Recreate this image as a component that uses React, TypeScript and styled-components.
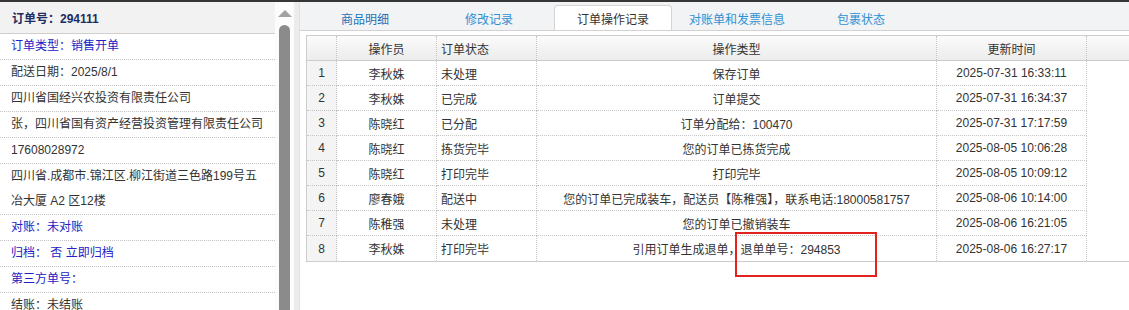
import React from "react";
import styled, { createGlobalStyle } from "styled-components";

const Global = createGlobalStyle`
  html, body { margin: 0; padding: 0; background: #fff; }
  body {
    width: 1129px; height: 310px; overflow: hidden;
    font-family: "Liberation Sans", "Noto Sans CJK SC", sans-serif;
    font-size: 12px; color: #333;
  }
  * { box-sizing: border-box; }
`;

const Page = styled.div`
  display: flex;
  flex-direction: column;
  width: 1129px;
  height: 310px;
  border-top: 2px solid #363636;
`;

const Main = styled.div`
  display: flex;
  flex: 1;
  min-height: 0;
`;

const LeftPanel = styled.div`
  width: 275px;
  display: flex;
  flex-direction: column;
  overflow: hidden;
`;

const LeftHeader = styled.div`
  height: 32px;
  flex: none;
  background: #f2f2f2;
  border-bottom: 1px solid #cfcfcf;
  padding-left: 12px;
  display: flex;
  align-items: center;
  font-weight: bold;
  color: #1d2d62;
`;

const InfoRow = styled.div<{ $blue?: boolean }>`
  flex: none;
  padding: 0 6px 0 11px;
  line-height: 25px;
  border-bottom: 1px dotted #c4c4c4;
  color: ${(p) => (p.$blue ? "#2222c4" : "#333")};
  white-space: nowrap;
`;

const ScrollTrack = styled.div`
  width: 19px;
  flex: none;
  display: flex;
  flex-direction: column;
  align-items: center;
  padding-top: 8px;
  gap: 8px;
  background: #fcfcfc;
`;

const ScrollArrow = styled.div`
  width: 0;
  height: 0;
  border-left: 7px solid transparent;
  border-right: 7px solid transparent;
  border-bottom: 7px solid #a2a2a2;
`;

const ScrollThumb = styled.div`
  width: 11px;
  flex: 1;
  background: #8b8b8b;
  border-radius: 6px 6px 0 0;
`;

const Splitter = styled.div`
  width: 6px;
  flex: none;
  background: #ececec;
  border-right: 1px solid #e2e2e2;
`;

const RightPanel = styled.div`
  flex: 1;
  display: flex;
  flex-direction: column;
  min-width: 0;
`;

const TabBar = styled.div`
  height: 29px;
  flex: none;
  background: #f2f3f4;
  border-bottom: 1px solid #d2d2d2;
  display: flex;
  align-items: flex-end;
  gap: 6px;
  padding-left: 6px;
`;

const Tab = styled.div<{ $active?: boolean; $dark?: boolean }>`
  width: 118px;
  height: 25px;
  display: flex;
  align-items: center;
  justify-content: center;
  border-radius: 4px 4px 0 0;
  border: 1px solid ${(p) => (p.$active ? "#d4d4d4" : "transparent")};
  border-bottom: none;
  background: ${(p) => (p.$active ? "#fff" : "transparent")};
  color: ${(p) => (p.$active ? "#333" : p.$dark ? "#1c72bb" : "#2f90d4")};
`;

const Content = styled.div`
  position: relative;
  flex: 1;
  padding: 4px 0 0 6px;
`;

const Grid = styled.div`
  border-left: 1px solid #cdcdcd;
`;

const HeaderRow = styled.div`
  display: grid;
  grid-template-columns: 30px 100px 100px 400px 150px 1fr;
  height: 26px;
  border-top: 1px solid #cdcdcd;
  border-bottom: 1px solid #cdcdcd;
  background: linear-gradient(#fbfbfb, #ececec);
`;

const Body = styled.div`
  border-bottom: 1px solid #cdcdcd;
`;

const BodyRow = styled.div`
  display: grid;
  grid-template-columns: 30px 100px 100px 400px 150px 1fr;
  height: 25px;
`;

const Cell = styled.div<{ $align?: "left" | "center"; $num?: boolean; $last?: boolean; $head?: boolean; $filler?: boolean }>`
  display: flex;
  align-items: center;
  justify-content: ${(p) => (p.$align === "left" ? "flex-start" : "center")};
  padding: ${(p) => (p.$align === "left" ? "0 4px" : "0")};
  white-space: nowrap;
  color: #333;
  border-right: ${(p) => (p.$filler ? "none" : "1px dotted #c6c6c6")};
  border-bottom: ${(p) => (p.$head || p.$last || p.$filler ? "none" : "1px dotted #c6c6c6")};
  background: ${(p) => (p.$num && !p.$head ? "#f4f4f4" : "transparent")};
`;

const Marker = styled.div`
  position: absolute;
  left: 435px;
  top: 201px;
  width: 142px;
  height: 45px;
  border: 2px solid #e2231d;
`;

const rows = [
  ["李秋姝", "未处理", "保存订单", "2025-07-31 16:33:11"],
  ["李秋姝", "已完成", "订单提交", "2025-07-31 16:34:37"],
  ["陈晓红", "已分配", "订单分配给：100470", "2025-07-31 17:17:59"],
  ["陈晓红", "拣货完毕", "您的订单已拣货完成", "2025-08-05 10:06:28"],
  ["陈晓红", "打印完毕", "打印完毕", "2025-08-05 10:09:12"],
  ["廖春娥", "配送中", "您的订单已完成装车，配送员【陈稚强】，联系电话:18000581757", "2025-08-06 10:14:00"],
  ["陈稚强", "未处理", "您的订单已撤销装车", "2025-08-06 16:21:05"],
  ["李秋姝", "打印完毕", "引用订单生成退单，退单单号：294853", "2025-08-06 16:27:17"],
];

const tabs = ["商品明细", "修改记录", "订单操作记录", "对账单和发票信息", "包裹状态"];

export default function App() {
  return (
    <>
      <Global />
      <Page>
        <Main>
          <LeftPanel>
            <LeftHeader>订单号：294111</LeftHeader>
            <InfoRow $blue>订单类型：销售开单</InfoRow>
            <InfoRow>配送日期：2025/8/1</InfoRow>
            <InfoRow>四川省国经兴农投资有限责任公司</InfoRow>
            <InfoRow>张，四川省国有资产经营投资管理有限责任公司</InfoRow>
            <InfoRow>17608028972</InfoRow>
            <InfoRow>
              四川省.成都市.锦江区.柳江街道三色路199号五
              <br />
              冶大厦 A2 区12楼
            </InfoRow>
            <InfoRow $blue>对账：未对账</InfoRow>
            <InfoRow $blue>归档： 否 立即归档</InfoRow>
            <InfoRow $blue>第三方单号：</InfoRow>
            <InfoRow>结账：未结账</InfoRow>
          </LeftPanel>
          <ScrollTrack>
            <ScrollArrow />
            <ScrollThumb />
          </ScrollTrack>
          <Splitter />
          <RightPanel>
            <TabBar>
              {tabs.map((t, i) => (
                <Tab key={t} $active={i === 2} $dark={i === 0}>
                  {t}
                </Tab>
              ))}
            </TabBar>
            <Content>
              <Grid>
                <HeaderRow>
                  <Cell $head $num />
                  <Cell $head>操作员</Cell>
                  <Cell $head $align="left">订单状态</Cell>
                  <Cell $head>操作类型</Cell>
                  <Cell $head>更新时间</Cell>
                  <Cell $head $filler />
                </HeaderRow>
                <Body>
                  {rows.map((r, i) => {
                    const last = i === rows.length - 1;
                    return (
                      <BodyRow key={i}>
                        <Cell $num $last={last}>{i + 1}</Cell>
                        <Cell $last={last}>{r[0]}</Cell>
                        <Cell $align="left" $last={last}>{r[1]}</Cell>
                        <Cell $last={last}>{r[2]}</Cell>
                        <Cell $last={last}>{r[3]}</Cell>
                        <Cell $filler />
                      </BodyRow>
                    );
                  })}
                </Body>
              </Grid>
              <Marker />
            </Content>
          </RightPanel>
        </Main>
      </Page>
    </>
  );
}
